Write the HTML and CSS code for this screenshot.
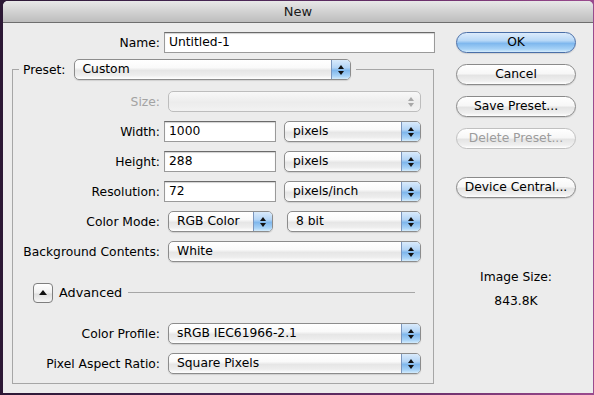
FILE: index.html
```html
<!DOCTYPE html>
<html lang="en">
<head>
<meta charset="UTF-8" />
<title>New</title>
<link rel="stylesheet" href="styles.css">
</head>
<body>

<div class="window">
    <div class="titlebar">New</div>

    <div class="dialog">
        <!-- LEFT: form -->
        <div class="main">
            <div class="row name-row">
                <span class="lbl">Name:</span>
                <div class="field name-field">Untitled-1</div>
            </div>

            <fieldset class="group">
                <legend class="legend">
                    <span class="legend-lbl">Preset:</span>
                    <span class="popup preset"><span class="val">Custom</span><span class="arr"></span></span>
                </legend>

                <div class="rows">
                    <div class="row">
                        <span class="lbl off">Size:</span>
                        <span class="popup disabled wide"><span class="val"></span><span class="arr"></span></span>
                    </div>

                    <div class="row">
                        <span class="lbl">Width:</span>
                        <div class="field num">1000</div>
                        <span class="popup unit"><span class="val">pixels</span><span class="arr"></span></span>
                    </div>

                    <div class="row">
                        <span class="lbl">Height:</span>
                        <div class="field num">288</div>
                        <span class="popup unit"><span class="val">pixels</span><span class="arr"></span></span>
                    </div>

                    <div class="row">
                        <span class="lbl">Resolution:</span>
                        <div class="field num">72</div>
                        <span class="popup unit"><span class="val">pixels/inch</span><span class="arr"></span></span>
                    </div>

                    <div class="row">
                        <span class="lbl">Color Mode:</span>
                        <span class="popup mode"><span class="val">RGB Color</span><span class="arr"></span></span>
                        <span class="popup depth"><span class="val">8 bit</span><span class="arr"></span></span>
                    </div>

                    <div class="row">
                        <span class="lbl">Background Contents:</span>
                        <span class="popup wide"><span class="val">White</span><span class="arr"></span></span>
                    </div>

                    <div class="row advanced">
                        <span class="disclosure"></span>
                        <span class="adv-lbl">Advanced</span>
                        <span class="adv-line"></span>
                    </div>

                    <div class="row spaced">
                        <span class="lbl">Color Profile:</span>
                        <span class="popup wide"><span class="val">sRGB IEC61966-2.1</span><span class="arr"></span></span>
                    </div>

                    <div class="row">
                        <span class="lbl">Pixel Aspect Ratio:</span>
                        <span class="popup wide"><span class="val">Square Pixels</span><span class="arr"></span></span>
                    </div>
                </div>
            </fieldset>
        </div>

        <!-- RIGHT: buttons -->
        <div class="side">
            <div class="btn default">OK</div>
            <div class="btn">Cancel</div>
            <div class="btn">Save Preset...</div>
            <div class="btn disabled">Delete Preset...</div>
            <div class="btn device">Device Central...</div>

            <div class="image-size">
                <p>Image Size:</p>
                <p class="size-val">843.8K</p>
            </div>
        </div>
    </div>
</div>

</body>
</html>
```

FILE: styles.css
```css
*{
    margin:0;
    padding:0;
    box-sizing:border-box;
}

body{
    font-family:"DejaVu Sans",sans-serif;
    font-size:12.3px;
    color:#000;
    height:395px;
    overflow:hidden;
    background:linear-gradient(90deg,#2c1835 0%,#452552 35%,#6a2f6a 70%,#9a4a8e 100%);
}

.window{
    margin:1px 0 0 3px;
    width:590px;
    height:392px;
    background:#ececec;
    border-radius:5px 5px 0 0;
    overflow:hidden;
}

.titlebar{
    height:22px;
    line-height:21px;
    text-align:center;
    font-size:13px;
    color:#1a1a1a;
    border-bottom:1px solid #6e6e6e;
    background:linear-gradient(#e8e8e8,#d2d2d2 50%,#bdbdbd);
}

.dialog{
    display:flex;
    padding:9px 0 0 9px;
}

.main{
    width:424px;
}

.row{
    display:flex;
    align-items:center;
    height:21px;
}

.lbl{
    width:147px;
    text-align:right;
    white-space:nowrap;
}

.lbl.off{
    color:#a3a3a3;
}

.name-row .lbl{
    width:148px;
}

/* text fields */
.field{
    height:21px;
    margin-left:4px;
    padding-left:4px;
    line-height:19px;
    background:#fff;
    border:1px solid #9a9a9a;
    border-top-color:#6a6a6a;
    box-shadow:inset 0 1px 1px rgba(0,0,0,0.18);
}

.name-field{
    width:271px;
}

.num{
    width:112px;
}

/* group box */
.group{
    margin-top:6px;
    width:422px;
    border:1px solid #a6a6a6;
    padding:11px 0 9px 0;
    min-inline-size:0;
}

.legend{
    margin-left:6px;
    padding:0 5px 0 4px;
    display:flex;
    align-items:center;
    height:21px;
}

.legend-lbl{
    margin-right:8px;
}

.rows{
    display:flex;
    flex-direction:column;
    gap:9px;
}

/* popup buttons */
.popup{
    display:flex;
    height:21px;
    margin-left:8px;
    border:1px solid #8c8c8c;
    border-radius:5px;
    overflow:hidden;
    background:linear-gradient(#ffffff 0%,#fafafa 40%,#e6e6e6 55%,#ededed 80%,#ffffff 100%);
    box-shadow:0 1px 1px rgba(0,0,0,0.12);
}

.popup .val{
    flex:1;
    padding-left:8px;
    line-height:19px;
    white-space:nowrap;
    overflow:hidden;
}

.popup .arr{
    width:19px;
    display:flex;
    flex-direction:column;
    align-items:center;
    justify-content:center;
    gap:2px;
    border-left:1px solid #7b96bd;
    background:linear-gradient(#d9eafb 0%,#b4d5f6 40%,#7fb7ec 55%,#a9d3f7 85%,#d4ecfc 100%);
}

.popup .arr::before,
.popup .arr::after{
    content:'';
    border-left:3px solid transparent;
    border-right:3px solid transparent;
}

.popup .arr::before{
    border-bottom:4px solid #111;
}

.popup .arr::after{
    border-top:4px solid #111;
}

.preset{
    width:277px;
    margin-left:0;
}

.wide{
    width:253px;
}

.unit{
    margin-left:8px;
    width:137px;
}

.mode{
    width:105px;
}

.depth{
    margin-left:14px;
    width:134px;
}

.popup.disabled{
    border-color:#bdbdbd;
    background:linear-gradient(#f8f8f8,#ececec 55%,#f2f2f2);
    box-shadow:none;
}

.popup.disabled .arr{
    border-left:none;
    background:none;
}

.popup.disabled .arr::before{
    border-bottom-color:#a8a8a8;
}

.popup.disabled .arr::after{
    border-top-color:#a8a8a8;
}

/* advanced */
.advanced{
    margin-top:11px;
    padding-left:20px;
}

.disclosure{
    width:20px;
    height:20px;
    border:1px solid #7e7e7e;
    border-radius:4px;
    background:linear-gradient(#ffffff,#f0f0f0 50%,#dedede 55%,#f6f6f6);
    display:flex;
    align-items:center;
    justify-content:center;
}

.disclosure::before{
    content:'';
    border-left:4px solid transparent;
    border-right:4px solid transparent;
    border-bottom:5px solid #111;
    margin-top:-1px;
}

.adv-lbl{
    margin-left:6px;
    font-size:12.8px;
}

.adv-line{
    flex:1;
    height:1px;
    margin:0 18px 0 6px;
    background:#a6a6a6;
}

.spaced{
    margin-top:11px;
}

/* right side */
.side{
    margin-left:20px;
    width:120px;
    display:flex;
    flex-direction:column;
    gap:11px;
}

.btn{
    height:21px;
    line-height:19px;
    text-align:center;
    border:1px solid #8a8a8a;
    border-radius:11px;
    background:linear-gradient(#ffffff 0%,#f7f7f7 45%,#e4e4e4 55%,#efefef 85%,#ffffff 100%);
    box-shadow:0 1px 1px rgba(0,0,0,0.12);
    white-space:nowrap;
}

.btn.default{
    border-color:#4a6fa8;
    background:linear-gradient(#dcebfb 0%,#b8d8f7 40%,#7fb8ee 55%,#a6d2f7 85%,#d6edfc 100%);
}

.btn.disabled{
    color:#9c9c9c;
    border-color:#c0c0c0;
    box-shadow:none;
}

.btn.device{
    margin-top:17px;
}

.image-size{
    margin-top:61px;
    text-align:center;
    line-height:15px;
}

.size-val{
    margin-top:9px;
}
```
